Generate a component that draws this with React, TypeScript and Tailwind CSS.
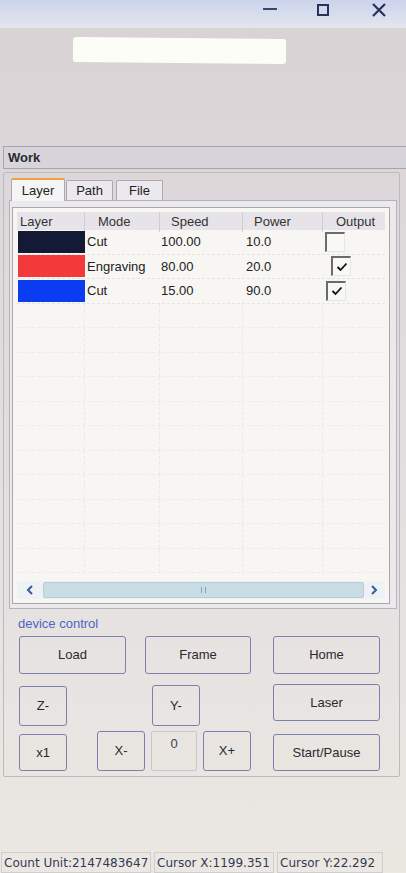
import * as React from "react";

const rows = [
	{ color: "bg-[#141a35]", mode: "Cut", speed: "100.00", power: "10.0", checked: false, box: "ml-[2px]" },
	{ color: "bg-[#f4393b]", mode: "Engraving", speed: "80.00", power: "20.0", checked: true, box: "ml-[8px]" },
	{ color: "bg-[#0b3cf2]", mode: "Cut", speed: "15.00", power: "90.0", checked: true, box: "ml-[3px]" },
];

const Check = ({ checked, className }: { checked: boolean; className: string }) => (
	<div
		className={`w-[20px] h-[20px] border-l-2 border-t-2 border-r border-b border-l-[#6b6b6b] border-t-[#6b6b6b] border-r-[#e6e6e6] border-b-[#e6e6e6] bg-[#f8f8f6] flex items-center justify-center ${className}`}
	>
		{checked && (
			<svg width="12" height="10" viewBox="0 0 12 10">
				<path d="M1.5 5 L4.5 8 L10.5 1.5" fill="none" stroke="#111" strokeWidth="1.8" />
			</svg>
		)}
	</div>
);

const Btn = ({ label, className }: { label: string; className: string }) => (
	<div
		className={`border border-[#7c80b0] rounded-[3px] flex items-center justify-center text-[13px] text-[#2a2a2e] ${className}`}
	>
		{label}
	</div>
);

const App = () => {
	const cell = "border-r border-dashed border-[#e9e9e7] h-full";
	return (
		<div className="w-[406px] h-[873px] overflow-hidden flex flex-col bg-linear-to-b from-[#d9d2d5] via-[#e2dee0] to-[#ebe8e2] font-['Liberation_Sans',Arial,sans-serif] text-[#222]">
			{/* title bar */}
			<div className="h-[28px] shrink-0 bg-linear-to-b from-[#cbd4ec] to-[#e4e6ef] flex items-center justify-end pr-[20px] text-[#27325f]">
				<div className="w-[14px] h-[2px] bg-[#3a4470] mr-[40px] -mt-[10px]" />
				<div className="w-[12px] h-[12px] border-2 border-[#27325f] mr-[43px] -mt-[8px]" />
				<svg width="14" height="14" viewBox="0 0 14 14" className="-mt-[8px]">
					<path d="M1 1 L13 13 M13 1 L1 13" stroke="#27325f" strokeWidth="2.2" />
				</svg>
			</div>

			{/* glare bar */}
			<div className="h-[118px] shrink-0 pt-[10px] pl-[73px]">
				<div className="w-[213px] h-[25px] bg-[#fdfdf8] rounded-[3px] rotate-[0.6deg]" />
			</div>

			{/* Work header */}
			<div className="h-[23px] shrink-0 ml-[3px] border border-r-0 border-[#a8a4ad] bg-[#d8d4dc] flex items-center pl-[4px] text-[13px] font-semibold text-[#2b2b2b]">
				Work
			</div>

			{/* group panel */}
			<div className="mt-[3px] ml-[3px] w-[397px] h-[605px] shrink-0 border border-[#bdb9c2] rounded-[2px] flex flex-col">
				{/* tabs */}
				<div className="flex items-end pl-[7px] pt-[4px] h-[27px]">
					<div className="w-[54px] h-[23px] bg-[#f6f5f6] border border-b-0 border-[#a9a9b4] border-t-2 border-t-[#f0a040] rounded-t-[2px] flex items-center justify-center text-[13px] relative z-10 -mb-px">
						Layer
					</div>
					<div className="ml-[1px] w-[47px] h-[20px] bg-[#ebe9ee] border border-b-0 border-[#a9a9b4] rounded-t-[2px] flex items-center justify-center text-[13px]">
						Path
					</div>
					<div className="ml-[3px] w-[47px] h-[20px] bg-[#ebe9ee] border border-b-0 border-[#a9a9b4] rounded-t-[2px] flex items-center justify-center text-[13px]">
						File
					</div>
				</div>

				{/* tab page */}
				<div className="ml-[5px] w-[388px] h-[409px] border border-[#b4b2bb] bg-[#ebe9ec] pl-[2px] pt-[6px]">
					<div className="w-[378px] h-[397px] border border-[#a8a6ae] bg-[#f7f6f3] p-[4px] flex flex-col">
						{/* header */}
						<div className="grid grid-cols-[68px_75px_83px_80px_61px] h-[18px] bg-[#e6e4e8] text-[13px] text-[#333] shrink-0">
							<div className="pl-[3px] border-r border-[#cfcdd3]">Layer</div>
							<div className="pl-[13px] border-r border-[#cfcdd3]">Mode</div>
							<div className="pl-[11px] border-r border-[#cfcdd3]">Speed</div>
							<div className="pl-[11px] border-r border-[#cfcdd3]">Power</div>
							<div className="pl-[13px]">Output</div>
						</div>
						{/* rows */}
						<div className="flex-1 overflow-hidden">
							{rows.map((r, i) => (
								<div
									key={i}
									className="grid grid-cols-[68px_75px_83px_80px_61px] h-[24.5px] border-b border-dashed border-[#e4e4e2] text-[13px] items-center"
								>
									<div className={`${r.color} h-[22px] ml-[1px]`} />
									<div className="pl-[2px]">{r.mode}</div>
									<div className="pl-[1px]">{r.speed}</div>
									<div className="pl-[3px]">{r.power}</div>
									<div>
										<Check checked={r.checked} className={r.box} />
									</div>
								</div>
							))}
							{Array.from({ length: 11 }).map((_, i) => (
								<div
									key={i}
									className="grid grid-cols-[68px_75px_83px_80px_61px] h-[24.5px] border-b border-dashed border-[#ebebe9]"
								>
									<div className={cell} />
									<div className={cell} />
									<div className={cell} />
									<div className={cell} />
									<div />
								</div>
							))}
						</div>
						{/* scrollbar */}
						<div className="h-[18px] shrink-0 flex items-center bg-[#eef2f4]">
							<div className="w-[26px] h-full flex items-center justify-center">
								<svg width="8" height="10" viewBox="0 0 8 10">
									<path d="M6 1 L2 5 L6 9" fill="none" stroke="#3a5a9a" strokeWidth="2" />
								</svg>
							</div>
							<div className="w-[321px] h-[16px] bg-[#c9dde7] border border-[#b8ccd8] rounded-[2px] flex items-center justify-center">
								<div className="w-[5px] h-[6px] border-x border-[#8aa0b0]" />
							</div>
							<div className="w-[20px] h-full flex items-center justify-center">
								<svg width="8" height="10" viewBox="0 0 8 10">
									<path d="M2 1 L6 5 L2 9" fill="none" stroke="#3a5a9a" strokeWidth="2" />
								</svg>
							</div>
						</div>
					</div>
				</div>

				{/* device control */}
				<div className="ml-[14px] mt-[7px] text-[13px] leading-[15px] text-[#4a66c4]">device control</div>
				<div className="flex mt-[5px] ml-[15px]">
					<Btn label="Load" className="w-[107px] h-[38px]" />
					<Btn label="Frame" className="ml-[19px] w-[106px] h-[38px]" />
					<Btn label="Home" className="ml-[22px] w-[107px] h-[38px]" />
				</div>
				<div className="flex mt-[10px] ml-[15px]">
					<div className="flex flex-col w-[48px]">
						<Btn label="Z-" className="w-[48px] h-[40px] mt-[2px]" />
						<Btn label="x1" className="w-[48px] h-[37px] mt-[8px]" />
					</div>
					<div className="flex flex-col ml-[30px] w-[154px]">
						<Btn label="Y-" className="ml-[55px] w-[48px] h-[41px] mt-[1px]" />
						<div className="flex mt-[5px]">
							<Btn label="X-" className="w-[48px] h-[40px]" />
							<div className="ml-[6px] w-[46px] h-[40px] border border-[#c8c6cc] rounded-[2px] flex justify-center pt-[2px] text-[13px] text-[#444]">
								0
							</div>
							<Btn label="X+" className="ml-[6px] w-[48px] h-[40px]" />
						</div>
					</div>
					<div className="flex flex-col ml-[22px] w-[107px]">
						<Btn label="Laser" className="w-[107px] h-[37px]" />
						<Btn label="Start/Pause" className="w-[107px] h-[37px] mt-[13px]" />
					</div>
				</div>
			</div>

			<div className="flex-1" />

			{/* status bar */}
			<div className="h-[21px] shrink-0 flex items-center font-['DejaVu_Sans',sans-serif] text-[12px] text-[#333a55] pl-[1px]">
				<div className="w-[150px] h-full border border-[#d0cdd0] flex items-center pl-[2px] whitespace-nowrap">
					Count Unit:2147483647
				</div>
				<div className="ml-[3px] w-[120px] h-full border border-[#d0cdd0] flex items-center pl-[2px] whitespace-nowrap">
					Cursor X:1199.351
				</div>
				<div className="ml-[3px] w-[106px] h-full border border-[#d0cdd0] flex items-center pl-[2px] whitespace-nowrap">
					Cursor Y:22.292
				</div>
			</div>
		</div>
	);
};

export default App;
